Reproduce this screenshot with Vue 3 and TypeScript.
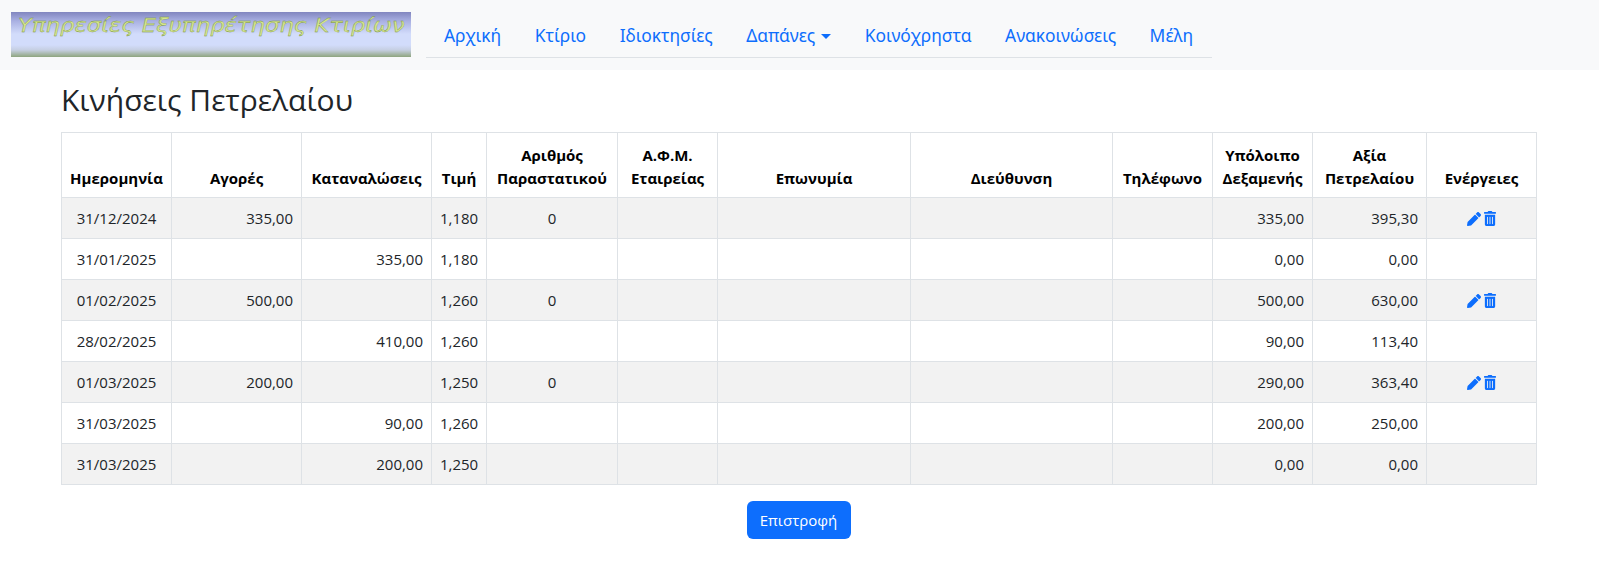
<script setup lang="ts">
interface Row {
  date: string
  buy: string
  use: string
  price: string
  doc: string
  balance: string
  value: string
  actions: boolean
}

const headers: string[] = [
  'Ημερομηνία', 'Αγορές', 'Καταναλώσεις', 'Τιμή', 'Αριθμός Παραστατικού', 'Α.Φ.Μ. Εταιρείας',
  'Επωνυμία', 'Διεύθυνση', 'Τηλέφωνο', 'Υπόλοιπο Δεξαμενής', 'Αξία Πετρελαίου', 'Ενέργειες',
]
const widths: number[] = [110, 130, 130, 55, 131, 100, 193, 202, 100, 100, 114, 110]

const rows: Row[] = [
  { date: '31/12/2024', buy: '335,00', use: '', price: '1,180', doc: '0', balance: '335,00', value: '395,30', actions: true },
  { date: '31/01/2025', buy: '', use: '335,00', price: '1,180', doc: '', balance: '0,00', value: '0,00', actions: false },
  { date: '01/02/2025', buy: '500,00', use: '', price: '1,260', doc: '0', balance: '500,00', value: '630,00', actions: true },
  { date: '28/02/2025', buy: '', use: '410,00', price: '1,260', doc: '', balance: '90,00', value: '113,40', actions: false },
  { date: '01/03/2025', buy: '200,00', use: '', price: '1,250', doc: '0', balance: '290,00', value: '363,40', actions: true },
  { date: '31/03/2025', buy: '', use: '90,00', price: '1,260', doc: '', balance: '200,00', value: '250,00', actions: false },
  { date: '31/03/2025', buy: '', use: '200,00', price: '1,250', doc: '', balance: '0,00', value: '0,00', actions: false },
]

const nav: string[] = ['Αρχική', 'Κτίριο', 'Ιδιοκτησίες', 'Δαπάνες', 'Κοινόχρηστα', 'Ανακοινώσεις', 'Μέλη']
</script>

<template>
  <div class="page">
    <header class="navbar">
      <div class="logo"><span>Υπηρεσίες Εξυπηρέτησης Κτιρίων</span></div>
      <ul class="nav">
        <li v-for="item in nav" :key="item">
          <a href="#" :class="{ caret: item === 'Δαπάνες' }">{{ item }}</a>
        </li>
      </ul>
    </header>
    <main class="content">
      <h1>Κινήσεις Πετρελαίου</h1>
      <table>
        <colgroup>
          <col v-for="(w, i) in widths" :key="i" :style="{ width: w + 'px' }" />
        </colgroup>
        <thead>
          <tr>
            <th v-for="h in headers" :key="h">{{ h }}</th>
          </tr>
        </thead>
        <tbody>
          <tr v-for="(r, i) in rows" :key="i">
            <td class="c">{{ r.date }}</td>
            <td class="r">{{ r.buy }}</td>
            <td class="r">{{ r.use }}</td>
            <td class="r">{{ r.price }}</td>
            <td class="c">{{ r.doc }}</td>
            <td></td>
            <td></td>
            <td></td>
            <td></td>
            <td class="r">{{ r.balance }}</td>
            <td class="r">{{ r.value }}</td>
            <td class="c icons">
              <template v-if="r.actions">
                <svg viewBox="0 0 512 512" width="14" height="14"><path fill="#0d6efd" d="M497.900 142.100l-46.100 46.100c-4.700 4.700-12.300 4.700-17 0l-111-111c-4.700-4.700-4.700-12.300 0-17l46.100-46.100c18.700-18.700 49.100-18.700 67.900 0l60.100 60.100c18.800 18.700 18.800 49.100 0 67.900zM284.200 99.800L21.600 362.400.4 483.900c-2.900 16.400 11.400 30.600 27.800 27.800l121.500-21.300 262.600-262.600c4.700-4.700 4.700-12.300 0-17l-111-111c-4.800-4.700-12.400-4.700-17.100 0z" /></svg>
                <svg viewBox="0 0 448 512" width="12" height="15" preserveAspectRatio="none"><path fill="#0d6efd" d="M32 464a48 48 0 0 0 48 48h288a48 48 0 0 0 48-48V128H32zm272-256a16 16 0 0 1 32 0v224a16 16 0 0 1-32 0zm-96 0a16 16 0 0 1 32 0v224a16 16 0 0 1-32 0zm-96 0a16 16 0 0 1 32 0v224a16 16 0 0 1-32 0zM432 32H312l-9.400-18.700A24 24 0 0 0 281.100 0H166.800a23.720 23.720 0 0 0-21.400 13.300L136 32H16A16 16 0 0 0 0 48v32a16 16 0 0 0 16 16h416a16 16 0 0 0 16-16V48a16 16 0 0 0-16-16z" /></svg>
              </template>
            </td>
          </tr>
        </tbody>
      </table>
      <div class="actions"><button type="button">Επιστροφή</button></div>
    </main>
  </div>
</template>

<style>
html, body { margin: 0; background: #fff; }
</style>

<style scoped>
.page {
  font-family: "Open Sans", "Noto Sans", sans-serif;
  font-size: 15px;
  color: #212529;
}
.navbar {
  height: 70px;
  background: #f8f9fa;
  display: flex;
  align-items: flex-start;
  box-sizing: border-box;
  padding: 12px 0 0 11px;
}
.logo {
  width: 400px;
  height: 45px;
  box-sizing: border-box;
  padding: 4px 0 0 7px;
  background: linear-gradient(#8186bf 0, #a9b0e2 9px, #d2dcfb 22px, #d2dcfb 33px, #c6cfe2 38px, #8ea57e 45px);
  overflow: hidden;
  white-space: nowrap;
}
.logo span {
  font-family: "DejaVu Sans", sans-serif;
  font-style: italic;
  font-size: 18.5px;
  line-height: 20px;
  color: #d6e68c;
  -webkit-text-stroke: 0.3px #6f8c40;
  display: inline-block;
  transform-origin: left center;
  transform: scaleX(1.23);
}
.nav {
  list-style: none;
  margin: 0 0 0 15px;
  padding: 0;
  height: 45px;
  width: 786px;
  display: flex;
  border-bottom: 1px solid #dee2e6;
}
.nav li { flex: none; }
.nav a {
  display: block;
  padding: 11px 16.75px 0;
  font-family: "Noto Sans", sans-serif;
  font-size: 17.4px;
  line-height: 24px;
  color: #0d6efd;
  text-decoration: none;
}
.nav li:first-child a { padding-left: 18px; }
.caret::after {
  content: "";
  display: inline-block;
  margin-left: 6px;
  vertical-align: 3px;
  border-top: 5px solid #0d6efd;
  border-left: 5px solid transparent;
  border-right: 5px solid transparent;
}
.content { padding: 0 63px 0 61px; }
h1 {
  margin: 0;
  padding: 8px 0 0;
  height: 54px;
  font-weight: 400;
  font-size: 30px;
  line-height: 44px;
  color: #212529;
}
table {
  border-collapse: collapse;
  table-layout: fixed;
  width: 1475px;
}
th, td {
  border: 1px solid #dee2e6;
  padding: 0 8px;
  box-sizing: border-box;
}
th {
  height: 65px;
  vertical-align: bottom;
  text-align: center;
  font-weight: 700;
  font-size: 15px;
  line-height: 23px;
  padding-bottom: 7px;
  color: #000;
}
td {
  height: 41px;
  font-size: 15px;
  vertical-align: middle;
}
tbody tr:nth-child(odd) td { background: #f2f2f2; }
.c { text-align: center; }
.r { text-align: right; }
.icons svg { vertical-align: -2px; margin: 0 2px 0 1px; }
.actions { display: flex; justify-content: center; padding-top: 16px; }
button {
  width: 104px;
  height: 38px;
  border: 0;
  border-radius: 6px;
  background: #0d6efd;
  color: #fff;
  font: 400 15px "Open Sans", sans-serif;
}
</style>
